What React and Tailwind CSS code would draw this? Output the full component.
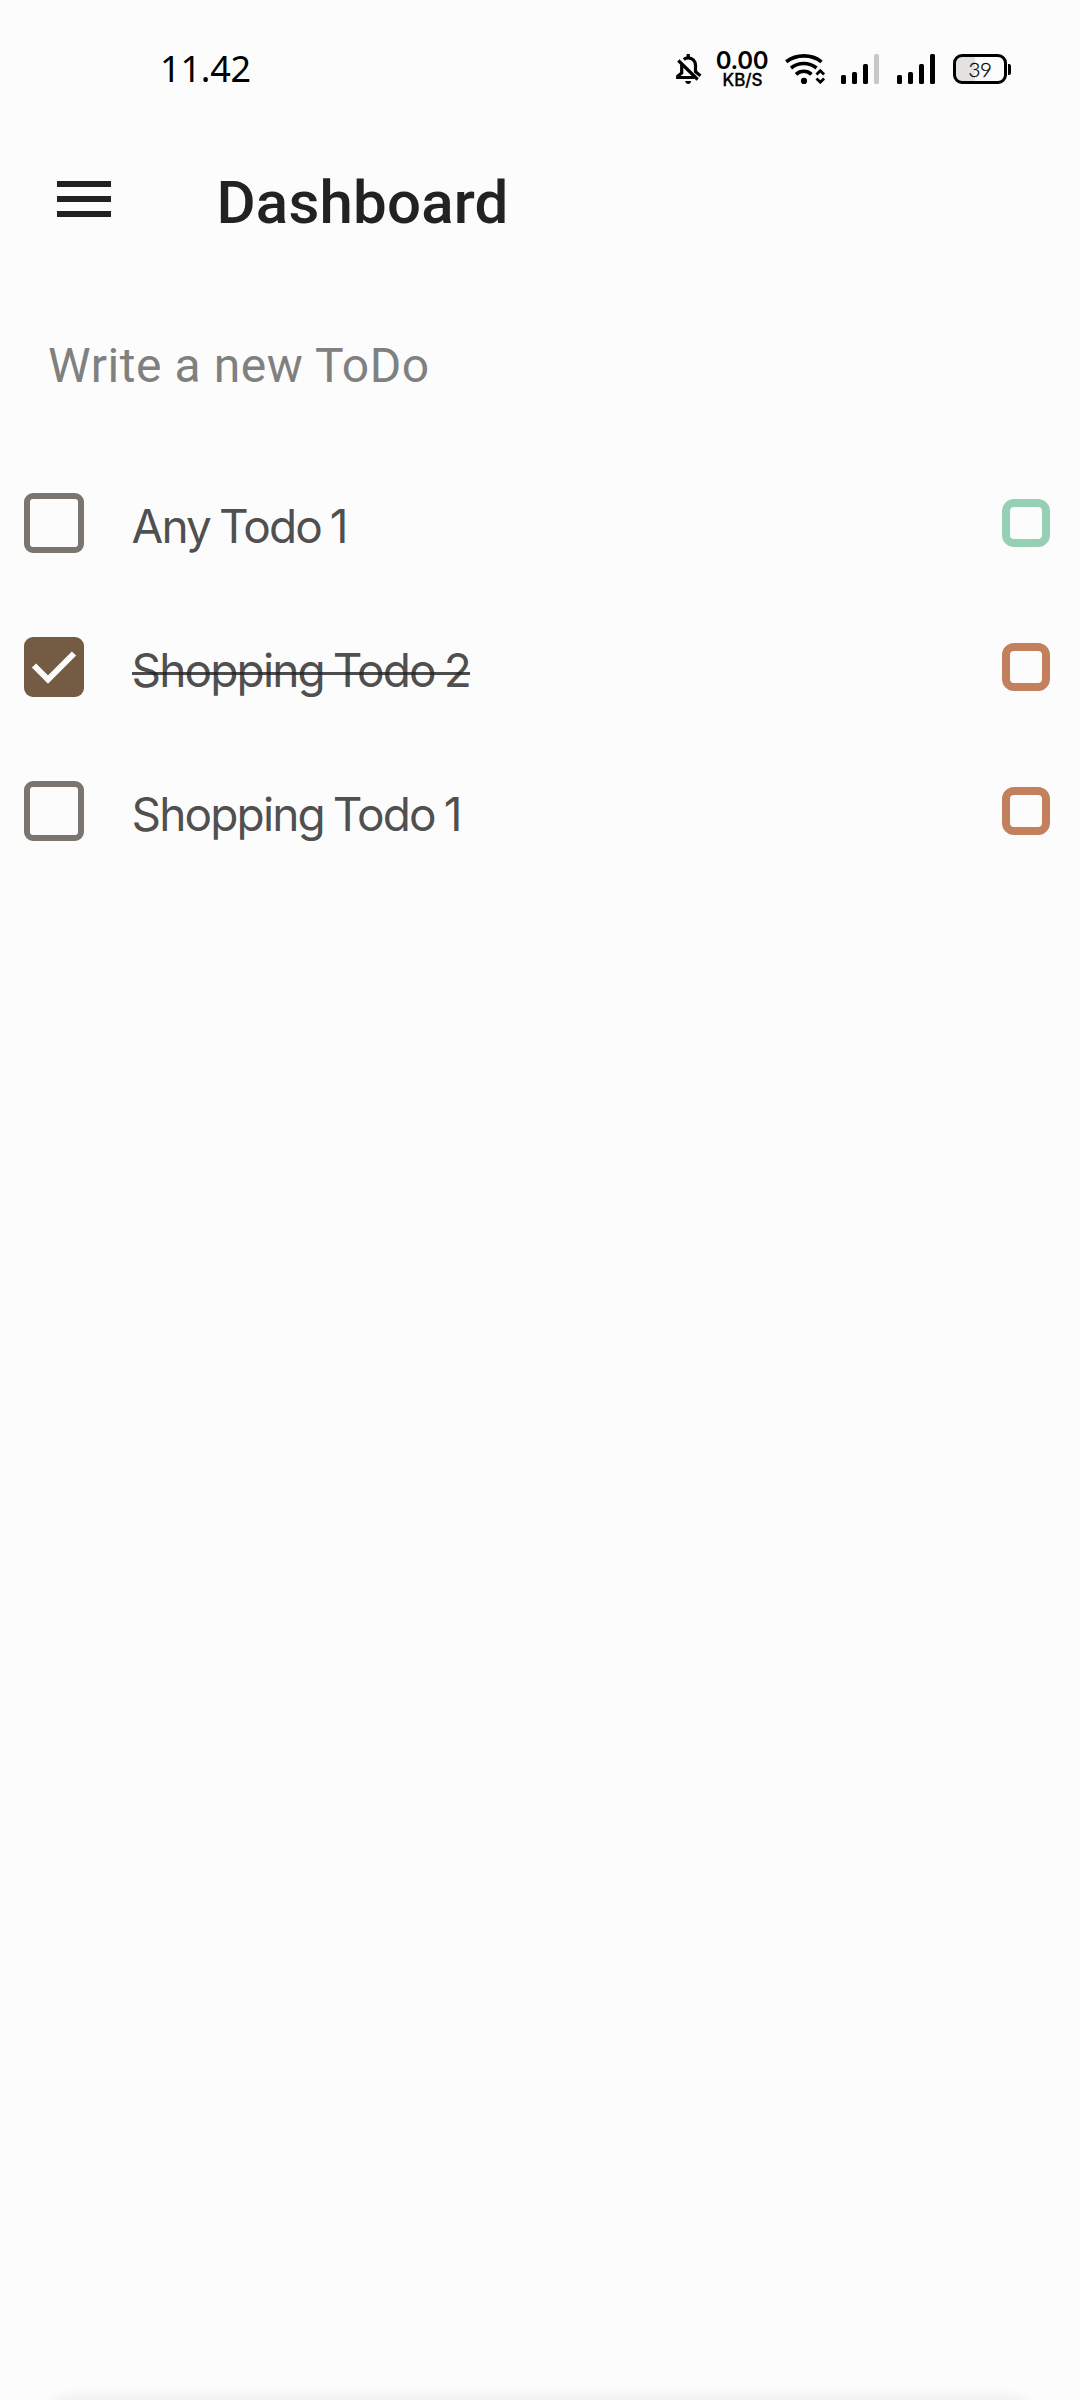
function Bars({ weak }) {
  return (
    <svg width="38" height="30" viewBox="0 0 38 30" className="shrink-0">
      <rect x="0" y="21" width="5" height="9" rx="1.5" />
      <rect x="11" y="18" width="5" height="12" rx="1.5" />
      <rect x="22" y="10" width="5" height="20" rx="1.5" />
      <rect x="33" y="0" width="5" height="30" rx="1.5" fill={weak ? "#c8c8c8" : "#000"} />
    </svg>
  );
}

function StatusBar() {
  return (
    <div className="flex h-[138px] items-center pl-[160px] text-black">
      <span className="w-[516px] font-['Noto_Sans'] text-[36px] leading-[48px] tracking-[-0.200px]">11.42</span>
      <svg width="26" height="30" viewBox="0 0 26 30" fill="none" stroke="#000" strokeWidth="3.200">
        <path d="M2.300 6.500 21.700 25.500" />
        <path d="M5.700 10.500v8.500l-4 3.200v1.300H18" />
        <path d="M7.800 5.500c1.200-1 2.700-1.700 4.400-1.700 4 0 7.300 3.200 7.300 7.500v6.500l5 4" />
        <path d="M12.200 0v4" />
        <path d="M9.200 27h6c-.3 1.800-1.400 3-3 3s-2.700-1.200-3-3z" fill="#000" stroke="none" />
      </svg>
      <div className="ml-[12px] flex w-[56px] flex-col items-center pt-px font-['Inter'] font-semibold">
        <span className="text-[24px] leading-[20px] tracking-[-0.300px]">0.00</span>
        <span className="pl-px text-[17px] leading-[18px] font-medium [-webkit-text-stroke:0.300px_#000]">KB/S</span>
      </div>
      <svg width="41" height="30" viewBox="0 0 41 30" fill="none" stroke="#000" strokeWidth="3.600" className="ml-[15px]">
        <path d="M1.200 7.800C11.500-.1 26.500-.1 36.500 7.800" />
        <path d="M6 14c7.500-6 18-6 25.500 0" />
        <path d="M11 20.300c4.500-4 11-4 15.500 0" />
        <circle cx="19" cy="26.900" r="3.100" fill="#000" stroke="none" />
        <path d="m31.500 20.500 3.800-3.700 3.800 3.700M31.500 24.500l3.800 3.700 3.800-3.700" strokeWidth="2.800" />
      </svg>
      <div className="ml-[15px] flex gap-[18px]">
        <Bars weak />
        <Bars />
      </div>
      <div className="ml-[18px] flex items-center gap-px">
        <div className="flex h-[30px] w-[54px] items-center justify-center rounded-[9px] border-[3px] border-black bg-linear-to-r from-[#e2e2e2] from-40% to-transparent to-40% font-['Lato'] text-[20.500px] font-light tracking-[-0.300px] [-webkit-text-stroke:0.300px_#000]">39</div>
        <div className="h-[11px] w-[3px] rounded-r-[2px] bg-black" />
      </div>
    </div>
  );
}

const todos = [
  { text: "Any Todo 1", done: false, color: "border-[#96d0b4]" },
  { text: "Shopping Todo 2", done: true, color: "border-[#c2805d]" },
  { text: "Shopping Todo 1", done: false, color: "border-[#c2805d]" },
];

function Todo({ text, done, color }) {
  return (
    <li className="flex h-[144px] items-center pr-[30px] pl-6">
      {done ? (
        <div className="size-[60px] rounded-[9px] bg-[#745b43]">
          <svg viewBox="0 0 60 60" fill="none" stroke="#fdfdfd" strokeWidth="6">
            <path d="M10 28.500 24 42.500 50 16.500" />
          </svg>
        </div>
      ) : (
        <div className="size-[60px] rounded-[9px] border-[6px] border-[#7b7570]" />
      )}
      <span className="relative mt-[6px] ml-[47.500px] font-['Inter'] text-[46px] leading-[60px] tracking-[-1.850px] text-[#202020]/80 [word-spacing:-2.200px]">
        {text}
        {done && <span className="absolute inset-x-0 top-[32px] h-[3px] bg-[#202020]/80" />}
      </span>
      <div className={`ml-auto size-[48px] rounded-[12px] border-[8px] ${color}`} />
    </li>
  );
}

export default function App() {
  return (
    <div className="flex h-[2400px] w-[1080px] flex-col overflow-hidden bg-[#fcfcfc]">
      <StatusBar />
      <header className="flex h-[122px] items-center pl-[57px]">
        <div className="flex w-[54px] flex-col gap-[9px]">
          <div className="h-[6px] bg-[#222]" />
          <div className="h-[6px] bg-[#222]" />
          <div className="h-[6px] bg-[#222]" />
        </div>
        <h1 className="mt-[7px] ml-[105.500px] font-['Roboto'] text-[60px] font-medium tracking-[0.200px] text-[#222]">Dashboard</h1>
      </header>
      <div className="mb-[3px] flex h-[188px] items-center pt-[23px] pl-12 font-['Roboto'] text-[48px] tracking-[0.570px] text-[#808080]">Write a new ToDo</div>
      <ul>{todos.map((t) => <Todo key={t.text} {...t} />)}</ul>
      <div className="mx-[48px] mt-auto -mb-10 h-10 shrink-0 rounded-[20px] shadow-[0_0_16px_rgba(0,0,0,.09)]" />
    </div>
  );
}
